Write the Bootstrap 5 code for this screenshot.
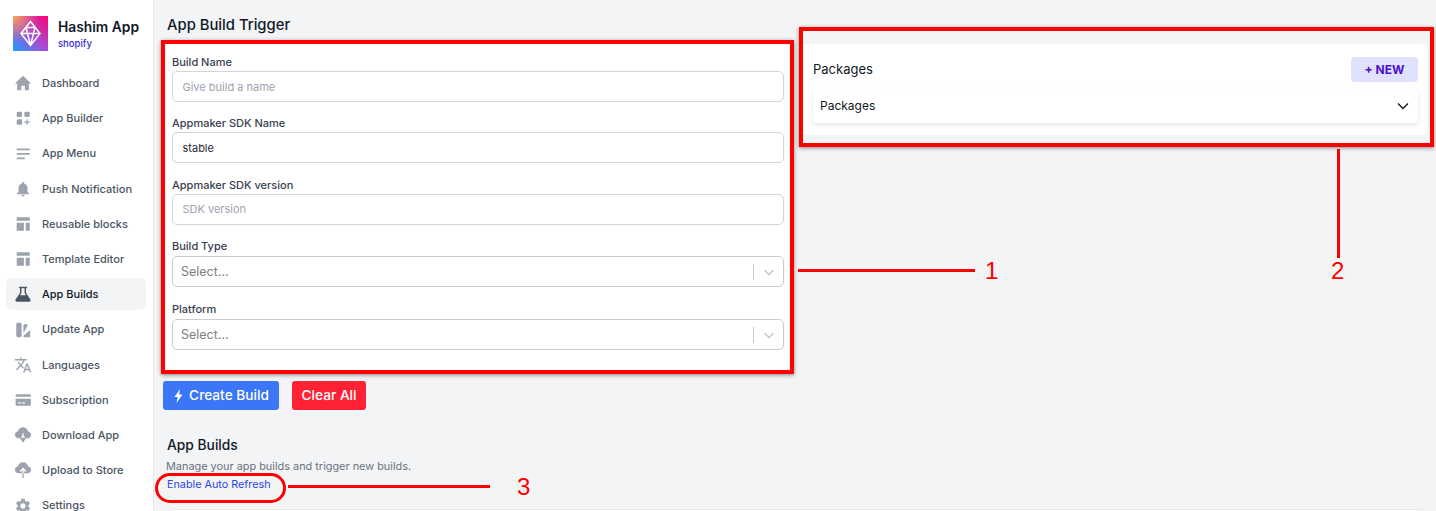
<!DOCTYPE html>
<html lang="en">
<head>
  <meta charset="UTF-8" />
  <meta name="viewport" content="width=device-width, initial-scale=1.0" />
  <title>App Build Trigger</title>
  <link href="https://cdn.jsdelivr.net/npm/bootstrap@5.3.0/dist/css/bootstrap.min.css" rel="stylesheet" />
  <style>
    html, body { height: 100%; overflow: hidden; }
    body { font-family: Inter, "Liberation Sans", sans-serif; background: #f3f4f6; color: #111827; }

    .side-bar { width: 154px; height: 511px; background: #fff; border-right: 1px solid #e5e7eb; flex: none; overflow: hidden; }
    .brand-box { padding: 16px 0 0 13px; gap: 10px; height: 65px; }
    .brand-name { font-size: 13.8px; font-weight: 600; line-height: 20px; margin-top: 1px; }
    .brand-sub { font-size: 9.5px; font-weight: 500; color: #3730e0; line-height: 14px; }
    .side-links { padding: 2.3px 7px 0 6px; }
    .side-link { height: 32px; margin-bottom: 3.2px; padding-left: 8px; gap: 10px; border-radius: 6px; font-size: 11px; font-weight: 500; color: #4b5563; text-decoration: none; }
    .side-link svg { width: 18px; height: 18px; fill: #9ca3af; flex: none; }
    .side-link.is-active { background: #f3f4f6; color: #111827; }
    .side-link.is-active svg { fill: #4b5563; }

    .main-area { position: relative; flex: 1; min-width: 0; padding: 0 8px 0 9px; }
    .page-title { font-size: 14.8px; font-weight: 500; line-height: 20px; padding: 15px 0 9px 4px; margin: 0; }
    .form-panel { width: 626px; flex: none; background: #fff; border-radius: 6px; padding: 8px 5px 20px 9px; box-sizing: border-box; height: 326px; }
    .field-label { font-size: 11px; font-weight: 500; color: #374151; line-height: 16px; margin: 2px 0 1px; display: block; }
    .field-input.form-control { height: 31px; font-size: 11px; padding: 0 9.5px; border: 1px solid #d1d5db; border-radius: 5px; color: #1f2937; margin-bottom: 13.3px; }
    .field-input.form-control::placeholder { color: #9ca3af; }
    .select-box { height: 31px; border: 1px solid #ccc; border-radius: 5px; padding: 1px 0 0 8px; font-size: 12.5px; color: #808080; margin: 2px 0 14px; }
    .select-sep { width: 1px; height: 16px; background: #ccc; }
    .select-caret { width: 29px; text-align: center; line-height: 0; }
    .select-caret svg { width: 12px; height: 12px; }

    .pack-panel { flex: 1; min-width: 0; margin: 44px 0 0 11px; height: 91px; background: #fff; border-radius: 6px; padding: 13px 10px 0 13px; }
    .pack-title { font-size: 13px; font-weight: 400; }
    .new-btn.btn { width: 67px; height: 25px; padding: 0; font-size: 12px; font-weight: 700; background: #e0e2fd; color: #4c0fd0; border: 0; border-radius: 4px; }
    .pack-row { height: 34px; margin-top: 7px; padding: 0 9px 0 7px; border-radius: 4px; background: #fff; font-size: 12px; font-weight: 400; box-shadow: 0 2px 5px rgba(17,24,39,.1); }

    .act-row { gap: 13px; margin: 11px 0 0 0; }
    .act-btn.btn { height: 29px; padding: 0; font-size: 13.7px; font-weight: 500; line-height: 1; white-space: nowrap; border: 0; border-radius: 3px; color: #fff; }
    .act-build { width: 116px; background: #3b76f6; gap: 5px; }
    .act-clear { width: 74px; background: #ff2234; }
    .builds-title { font-size: 13.8px; font-weight: 500; line-height: 20px; margin: 25px 0 0 4px; }
    .builds-desc { font-size: 10.9px; color: #6b7280; line-height: 16px; margin: 3px 0 0 3px; }
    .builds-link { display: block; font-size: 10.8px; color: #2a47e6; text-decoration: none; line-height: 16px; margin: 3px 0 0 4px; }
    .table-edge { height: 20px; margin: 16px 0 0 4px; background: #fff; border: 1px solid #e5e7eb; border-radius: 6px 6px 0 0; }

    .note-box { position: absolute; border: 4px solid #fe0000; box-shadow: 0 1px 4px rgba(0,0,0,.45); }
    .note-ring { position: absolute; border: 3px solid #fe0000; border-radius: 16px; }
    .note-line { position: absolute; background: #fe0000; }
    .note-num { position: absolute; color: #fe0000; font-size: 24px; line-height: 24px; font-family: "Liberation Sans", sans-serif; }
  </style>
</head>
<body>
  <div class="d-flex">
    <nav class="side-bar">
      <div class="brand-box d-flex">
        <svg width="35" height="35" viewBox="0 0 35 35">
          <defs>
            <linearGradient id="logoA" x1="0" y1="1" x2="1" y2="0">
              <stop offset="0" stop-color="#1c9dff" />
              <stop offset=".5" stop-color="#a84bd6" />
              <stop offset="1" stop-color="#ff0072" />
            </linearGradient>
            <radialGradient id="logoB" cx="0" cy="0" r=".75">
              <stop offset="0" stop-color="#ffa64d" />
              <stop offset="1" stop-color="#ff8a5a" stop-opacity="0" />
            </radialGradient>
          </defs>
          <rect width="35" height="35" fill="url(#logoA)" />
          <rect width="35" height="35" fill="url(#logoB)" />
          <path d="M17.500 5.500l9.500 12-9.500 12-9.500-12zM8 17.500h19M13 11.500h9M13 11.500l4.500 18 4.500-18" fill="none" stroke="#fff" stroke-width="1.500" />
        </svg>
        <div>
          <div class="brand-name">Hashim App</div>
          <div class="brand-sub">shopify</div>
        </div>
      </div>
      <div class="side-links">
        <a class="side-link d-flex align-items-center" href="#"><svg viewBox="0 0 20 20"><path d="M10 2 1 10.500h2.500V18h4.500v-5h4v5h4.500v-7.500H19z"/></svg>Dashboard</a>
        <a class="side-link d-flex align-items-center" href="#"><svg viewBox="0 0 20 20"><rect x="3" y="3" width="6" height="6" rx="1.500"/><rect x="11.500" y="3" width="6" height="6" rx="1.500"/><rect x="3" y="11.500" width="6" height="6" rx="1.500"/><path d="M13.800 11.500h1.400v2.300h2.300v1.400h-2.300v2.300h-1.400v-2.300h-2.300v-1.400h2.300z"/></svg>App Builder</a>
        <a class="side-link d-flex align-items-center" href="#"><svg viewBox="0 0 20 20"><path d="M3 4h14.500v1.700H3zM3 9h14.500v1.700H3zM3 14h9v1.700H3z"/></svg>App Menu</a>
        <a class="side-link d-flex align-items-center" href="#"><svg viewBox="0 0 24 24"><path d="M12 22c1.100 0 2-.9 2-2h-4c0 1.100.9 2 2 2zm6-6v-5c0-3.070-1.630-5.640-4.500-6.320V4c0-.83-.67-1.500-1.500-1.500s-1.500.67-1.500 1.500v.68C7.640 5.360 6 7.920 6 11v5l-2 2v1h16v-1l-2-2z"/></svg>Push Notification</a>
        <a class="side-link d-flex align-items-center" href="#"><svg viewBox="0 0 20 20"><path d="M3 2.500h14.500v4H3zM3 8.500h8v9H3zM13 8.500h4.500v9H13z"/></svg>Reusable blocks</a>
        <a class="side-link d-flex align-items-center" href="#"><svg viewBox="0 0 20 20"><path d="M3 2.500h14.500v4H3zM3 8.500h8v9H3zM13 8.500h4.500v9H13z"/></svg>Template Editor</a>
        <a class="side-link is-active d-flex align-items-center" href="#"><svg viewBox="0 0 20 20"><path fill-rule="evenodd" d="M5.500 2h9v1.700h-1.200v4.800L18.200 16c.7 1.200 0 2.500-1.400 2.500H3.200c-1.400 0-2.100-1.300-1.400-2.500l4.900-7.500V3.700H5.500zM8.300 3.700v5.300L6.600 11.500h6.800L11.700 9V3.700z"/></svg>App Builds</a>
        <a class="side-link d-flex align-items-center" href="#"><svg viewBox="0 0 20 20"><rect x="2.500" y="2" width="6" height="16" rx="1.500"/><path d="M10.500 4.500l2-1.500 3 1.500-5 9zM10.500 18v-1.500L18 10v8z"/></svg>Update App</a>
        <a class="side-link d-flex align-items-center" href="#"><svg viewBox="0 0 24 24"><path d="M12.870 15.070l-2.540-2.510.03-.03c1.740-1.940 2.980-4.170 3.710-6.530H17V4h-7V2H8v2H1v1.990h11.170C11.500 7.920 10.440 9.750 9 11.350 8.070 10.320 7.300 9.190 6.690 8h-2c.73 1.630 1.730 3.170 2.980 4.560l-5.090 5.020L4 19l5-5 3.110 3.110.76-2.040zM18.500 10h-2L12 22h2l1.120-3h4.750L21 22h2l-4.500-12zm-2.620 7l1.620-4.330L19.120 17h-3.240z"/></svg>Languages</a>
        <a class="side-link d-flex align-items-center" href="#"><svg viewBox="0 0 20 20"><path fill-rule="evenodd" d="M3 3.500h14.500c.7 0 1.200.5 1.200 1.200v10.600c0 .7-.5 1.200-1.200 1.200H3c-.7 0-1.200-.5-1.200-1.200V4.700c0-.7.5-1.200 1.200-1.200zM1.800 6.500v2h16.900v-2zM4.500 12.500v1.500h3v-1.500zM9 12.500v1.500h3v-1.500z"/></svg>Subscription</a>
        <a class="side-link d-flex align-items-center" href="#"><svg viewBox="0 0 20 20"><path d="M10 1.500c3 0 5.200 2 5.600 4.500 2 .2 3.400 1.800 3.400 3.700 0 2.100-1.700 3.800-3.800 3.800h-1.700l-2.800-2.700V8h-1.400v2.800l-2.800 2.700H4.800C2.700 13.500 1 11.800 1 9.700 1 7.800 2.400 6.200 4.400 6 4.800 3.500 7 1.500 10 1.500zM6.500 13.200l1-1 1.800 1.800v-1.500h1.400V14l1.800-1.800 1 1L10 18.700z"/></svg>Download App</a>
        <a class="side-link d-flex align-items-center" href="#"><svg viewBox="0 0 20 20"><path d="M10 1.500c3 0 5.200 2 5.600 4.500 2 .2 3.400 1.800 3.400 3.700 0 2.100-1.700 3.800-3.800 3.800h-4.500v-3.300l1.900 1.900 1.100-1.100-3.700-3.700-3.700 3.700 1.100 1.100 1.900-1.900v3.300H4.800C2.700 13.500 1 11.800 1 9.700 1 7.800 2.400 6.200 4.400 6 4.800 3.500 7 1.500 10 1.500zM9.300 13.500h1.400V19H9.300z"/></svg>Upload to Store</a>
        <a class="side-link d-flex align-items-center" href="#"><svg viewBox="0 0 24 24"><path d="M19.140 12.940c.04-.3.06-.61.06-.94 0-.32-.02-.64-.07-.94l2.030-1.580c.18-.14.23-.41.12-.61l-1.920-3.320c-.12-.22-.37-.29-.59-.22l-2.390.96c-.5-.38-1.030-.7-1.620-.94l-.36-2.540c-.04-.24-.24-.41-.48-.41h-3.840c-.24 0-.43.17-.47.41l-.36 2.540c-.59.24-1.130.57-1.620.94l-2.390-.96c-.22-.08-.47 0-.59.22L2.740 8.870c-.12.21-.08.47.12.61l2.030 1.580c-.05.3-.09.63-.09.94s.02.64.07.94l-2.030 1.580c-.18.14-.23.41-.12.61l1.920 3.320c.12.22.37.29.59.22l2.390-.96c.5.38 1.030.7 1.620.94l.36 2.540c.05.24.24.41.48.41h3.840c.24 0 .44-.17.47-.41l.36-2.540c.59-.24 1.130-.56 1.620-.94l2.390.96c.22.08.47 0 .59-.22l1.920-3.320c.12-.22.07-.47-.12-.61l-2.010-1.580zM12 15.600c-1.980 0-3.600-1.620-3.600-3.600s1.620-3.600 3.600-3.600 3.600 1.620 3.600 3.600-1.620 3.600-3.600 3.600z"/></svg>Settings</a>
      </div>
    </nav>

    <main class="main-area">
      <div class="d-flex">
        <div>
          <h1 class="page-title">App Build Trigger</h1>
          <form class="form-panel">
            <label class="field-label">Build Name</label>
            <input class="form-control field-input" type="text" placeholder="Give build a name" />
            <label class="field-label">Appmaker SDK Name</label>
            <input class="form-control field-input" type="text" value="stable" />
            <label class="field-label">Appmaker SDK version</label>
            <input class="form-control field-input" type="text" placeholder="SDK version" />
            <label class="field-label">Build Type</label>
            <div class="select-box d-flex align-items-center">
              <span class="flex-grow-1">Select...</span>
              <span class="select-sep"></span>
              <span class="select-caret"><svg viewBox="0 0 12 12"><path d="M1.500 4l4.500 4.500L10.500 4" fill="none" stroke="#ccc" stroke-width="1.600"/></svg></span>
            </div>
            <label class="field-label">Platform</label>
            <div class="select-box d-flex align-items-center">
              <span class="flex-grow-1">Select...</span>
              <span class="select-sep"></span>
              <span class="select-caret"><svg viewBox="0 0 12 12"><path d="M1.500 4l4.500 4.500L10.500 4" fill="none" stroke="#ccc" stroke-width="1.600"/></svg></span>
            </div>
          </form>
        </div>
        <section class="pack-panel">
          <div class="d-flex justify-content-between align-items-center">
            <span class="pack-title">Packages</span>
            <button class="btn new-btn" type="button">+ NEW</button>
          </div>
          <div class="pack-row d-flex justify-content-between align-items-center">
            <span>Packages</span>
            <svg width="12" height="12" viewBox="0 0 12 12"><path d="M1 3.500l5 5 5-5" fill="none" stroke="#111" stroke-width="1.300"/></svg>
          </div>
        </section>
      </div>

      <div class="act-row d-flex">
        <button class="btn act-btn act-build d-flex align-items-center justify-content-center" type="button">
          <svg width="11" height="14" viewBox="0 0 10 14"><path d="M6.500 0 1 8h3.200L3 14l6-8.500H5.600z" fill="#fff"/></svg>Create Build
        </button>
        <button class="btn act-btn act-clear" type="button">Clear All</button>
      </div>

      <h2 class="builds-title">App Builds</h2>
      <p class="builds-desc mb-0">Manage your app builds and trigger new builds.</p>
      <a class="builds-link" href="#">Enable Auto Refresh</a>
      <div class="table-edge"></div>

      <!-- callouts drawn over the screenshot -->
      <div class="note-box" style="left:7px;top:40px;width:633px;height:334px"></div>
      <div class="note-box" style="left:645px;top:27px;width:635px;height:120px"></div>
      <div class="note-ring" style="left:1px;top:473px;width:131px;height:30px"></div>
      <div class="note-line" style="left:644px;top:269px;width:177px;height:3px"></div>
      <div class="note-line" style="left:1183px;top:149px;width:3px;height:109px"></div>
      <div class="note-line" style="left:134px;top:485px;width:202px;height:3px"></div>
      <div class="note-num" style="left:831px;top:259px">1</div>
      <div class="note-num" style="left:1177px;top:259px">2</div>
      <div class="note-num" style="left:363px;top:475px">3</div>
    </main>
  </div>

  <script src="https://cdn.jsdelivr.net/npm/bootstrap@5.3.0/dist/js/bootstrap.bundle.min.js"></script>
</body>
</html>
